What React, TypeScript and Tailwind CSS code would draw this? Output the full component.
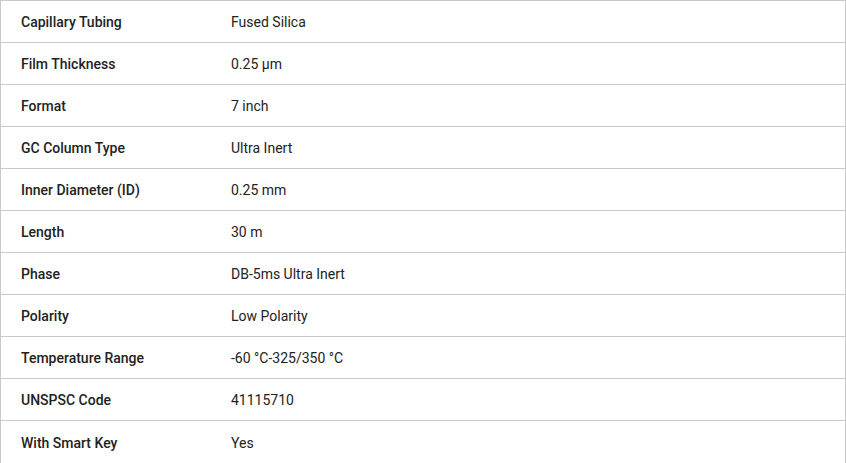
import React from 'react';

const specs: [string, string][] = [
  ['Capillary Tubing', 'Fused Silica'],
  ['Film Thickness', '0.25 µm'],
  ['Format', '7 inch'],
  ['GC Column Type', 'Ultra Inert'],
  ['Inner Diameter (ID)', '0.25 mm'],
  ['Length', '30 m'],
  ['Phase', 'DB-5ms Ultra Inert'],
  ['Polarity', 'Low Polarity'],
  ['Temperature Range', '-60 °C-325/350 °C'],
  ['UNSPSC Code', '41115710'],
  ['With Smart Key', 'Yes'],
];

export default function App() {
  return (
    <div className="w-[846px] h-[463px] bg-white font-['Roboto',sans-serif] text-[14px] text-[#222]">
      <div className="border border-[#c9c9c9]">
        {specs.map(([label, value], i) => (
          <div
            key={label}
            className={`flex h-[42px] items-center pt-[2px] ${i < specs.length - 1 ? 'border-b border-[#c9c9c9]' : ''}`}
          >
            <div className="w-[230px] pl-[20px] font-medium">{label}</div>
            <div>{value}</div>
          </div>
        ))}
      </div>
    </div>
  );
}
